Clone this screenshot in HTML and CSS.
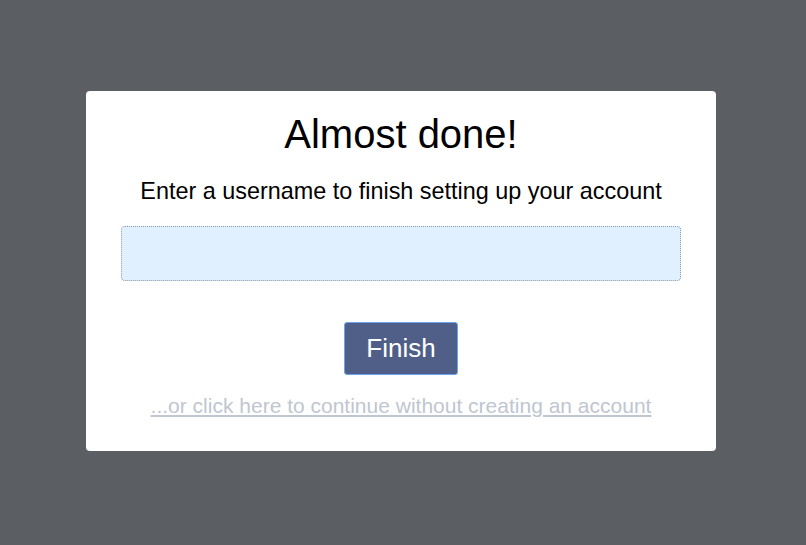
FILE: index.html
```html
<!DOCTYPE html>
<html>
<head>
<meta charset="utf-8">
<link rel="stylesheet" href="styles.css">
</head>
<body>
<div class="page">
  <div class="card">
    <h1 class="title">Almost done!</h1>
    <p class="subtitle">Enter a username to finish setting up your account</p>
    <input class="field" type="text">
    <button class="finish">Finish</button>
    <a class="skip" href="#">...or click here to continue without creating an account</a>
  </div>
</div>
</body>
</html>
```
FILE: styles.css
```css
html, body {
  margin: 0;
  padding: 0;
  height: 100%;
}
body {
  background: #5b5f63;
  font-family: "Liberation Sans", Arial, sans-serif;
}
.page {
  display: flex;
  justify-content: flex-start;
  padding-top: 91px;
  padding-left: 86px;
}
.card {
  width: 630px;
  height: 360px;
  box-sizing: border-box;
  background: #fff;
  border-radius: 4px;
  display: flex;
  flex-direction: column;
  align-items: center;
  padding-top: 20px;
}
.title {
  margin: 0;
  font-size: 40px;
  font-weight: normal;
  line-height: 46px;
  color: #000;
}
.subtitle {
  margin: 21px 0 0 0;
  font-size: 23.4px;
  line-height: 26px;
  color: #000;
}
.field {
  margin-top: 22px;
  width: 560px;
  height: 55px;
  box-sizing: border-box;
  border: 1px dotted #8d9aa8;
  border-radius: 4px;
  background: #e0f0ff;
  outline: none;
  padding: 0;
}
.finish {
  margin-top: 41px;
  width: 114px;
  height: 53px;
  box-sizing: border-box;
  background: #4f5f88;
  border: 1px solid #6aa4ee;
  border-radius: 3px;
  color: #fff;
  font-family: "Liberation Sans", Arial, sans-serif;
  font-size: 26px;
  padding: 0;
}
.skip {
  margin-top: 19px;
  font-size: 21px;
  line-height: 24px;
  color: #c0c6d0;
  text-decoration: underline;
}
```
